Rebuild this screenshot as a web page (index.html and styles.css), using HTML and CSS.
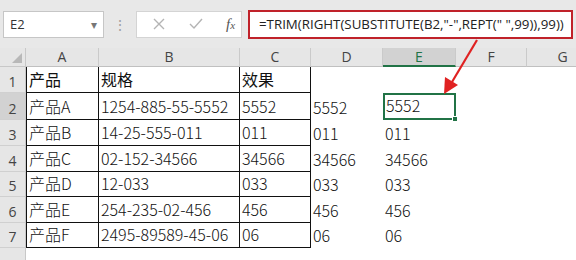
FILE: index.html
```html
<!DOCTYPE html>
<html lang="zh-CN">

<head>
  <meta charset="UTF-8" />
  <title>TRIM 公式示例</title>
  <link rel="stylesheet" href="styles.css">
</head>

<body>

  <!-- Formula bar -->
  <div class="formula-bar">
    <div class="name-box">
      <span>E2</span>
      <span class="drop">&#9662;</span>
    </div>
    <div class="grip">&#8942;</div>
    <div class="fx-box">
      <svg class="icon" width="14" height="14" viewBox="0 0 14 14">
        <path d="M2 2 L12 12 M12 2 L2 12" stroke="#b4b4b4" stroke-width="1.4" fill="none" />
      </svg>
      <svg class="icon" width="16" height="14" viewBox="0 0 16 14">
        <path d="M2 7 L6 11 L14 2" stroke="#b4b4b4" stroke-width="1.4" fill="none" />
      </svg>
      <span class="fx"><i>f</i><small>x</small></span>
    </div>
    <div class="formula">=TRIM(RIGHT(SUBSTITUTE(B2,"-",REPT(" ",99)),99))</div>
  </div>

  <!-- Sheet -->
  <div class="sheet">
    <div class="corner"></div>
    <div class="col-h">A</div>
    <div class="col-h">B</div>
    <div class="col-h">C</div>
    <div class="col-h">D</div>
    <div class="col-h active">E</div>
    <div class="col-h">F</div>
    <div class="col-h">G</div>

    <div class="row-h">1</div>
    <div class="cell b first top">产品</div>
    <div class="cell b top">规格</div>
    <div class="cell b top">效果</div>
    <div class="cell"></div>
    <div class="cell"></div>
    <div class="cell"></div>
    <div class="cell"></div>

    <div class="row-h active">2</div>
    <div class="cell b first">产品A</div>
    <div class="cell b">1254-885-55-5552</div>
    <div class="cell b">5552</div>
    <div class="cell">5552</div>
    <div class="cell selected">5552<span class="handle"></span></div>
    <div class="cell"></div>
    <div class="cell"></div>

    <div class="row-h">3</div>
    <div class="cell b first">产品B</div>
    <div class="cell b">14-25-555-011</div>
    <div class="cell b">011</div>
    <div class="cell">011</div>
    <div class="cell">011</div>
    <div class="cell"></div>
    <div class="cell"></div>

    <div class="row-h">4</div>
    <div class="cell b first">产品C</div>
    <div class="cell b">02-152-34566</div>
    <div class="cell b">34566</div>
    <div class="cell">34566</div>
    <div class="cell">34566</div>
    <div class="cell"></div>
    <div class="cell"></div>

    <div class="row-h">5</div>
    <div class="cell b first">产品D</div>
    <div class="cell b">12-033</div>
    <div class="cell b">033</div>
    <div class="cell">033</div>
    <div class="cell">033</div>
    <div class="cell"></div>
    <div class="cell"></div>

    <div class="row-h">6</div>
    <div class="cell b first">产品E</div>
    <div class="cell b">254-235-02-456</div>
    <div class="cell b">456</div>
    <div class="cell">456</div>
    <div class="cell">456</div>
    <div class="cell"></div>
    <div class="cell"></div>

    <div class="row-h">7</div>
    <div class="cell b first">产品F</div>
    <div class="cell b">2495-89589-45-06</div>
    <div class="cell b">06</div>
    <div class="cell">06</div>
    <div class="cell">06</div>
    <div class="cell"></div>
    <div class="cell"></div>

    <div class="row-h"></div>
  </div>

  <!-- red arrow pointing from the formula to E2 -->
  <svg class="arrow" width="576" height="260" viewBox="0 0 576 260">
    <line x1="477" y1="40" x2="452" y2="82" stroke="#e02222" stroke-width="2.2" />
    <polygon points="444,94 445,77 458,85" fill="#e02222" />
  </svg>

</body>

</html>
```

FILE: styles.css
```css
* {
  margin: 0;
  padding: 0;
  box-sizing: border-box;
}

body {
  width: 576px;
  height: 260px;
  overflow: hidden;
  background-color: #fff;
  font-family: "Noto Sans CJK SC", "Noto Sans", sans-serif;
  position: relative;
}

/* Formula bar */
.formula-bar {
  height: 48px;
  background-color: #e8e8e8;
  display: flex;
  align-items: center;
  padding: 0 3px 0 3px;
}

.name-box {
  width: 101px;
  height: 27px;
  background-color: #fff;
  border: 1px solid #c6c6c6;
  display: flex;
  align-items: center;
  justify-content: space-between;
  padding: 0 6px 0 6px;
  font-family: "Open Sans", sans-serif;
  font-size: 13px;
  color: #333;
}

.name-box .drop {
  color: #777;
  font-size: 12px;
}

.grip {
  width: 32px;
  text-align: center;
  color: #a0a0a0;
  font-size: 14px;
}

.fx-box {
  width: 106px;
  height: 27px;
  background-color: #fff;
  border: 1px solid #d4d4d4;
  display: flex;
  align-items: center;
  gap: 22px;
  padding-left: 15px;
}

.fx {
  font-family: "Liberation Serif", serif;
  color: #555;
  font-size: 15px;
}

.fx small {
  font-size: 11px;
  font-style: italic;
}

.formula {
  flex: 1;
  margin-left: 6px;
  height: 29px;
  background-color: #fff;
  border: 2px solid #c0222a;
  display: flex;
  align-items: center;
  padding-left: 9px;
  font-family: "Open Sans", sans-serif;
  font-size: 13.3px;
  color: #222;
  white-space: nowrap;
  overflow: hidden;
}

/* Sheet grid */
.sheet {
  display: grid;
  grid-template-columns: 26px 73px 141px 71px 72px 73px 71px 72px;
  grid-template-rows: 19px 26px 27px 26px 26px 25px 26px 25px 20px;
}

.corner {
  background-color: #e6e6e6;
  border-right: 1px solid #c8c8c8;
  border-bottom: 1px solid #c8c8c8;
  position: relative;
}

.corner::after {
  content: "";
  position: absolute;
  right: 3px;
  bottom: 3px;
  border-left: 10px solid transparent;
  border-bottom: 10px solid #b8b8b8;
}

.col-h {
  background-color: #e6e6e6;
  border-right: 1px solid #cacaca;
  border-bottom: 1px solid #c0c0c0;
  text-align: center;
  font-family: "Open Sans", sans-serif;
  font-size: 14px;
  line-height: 18px;
  color: #444;
}

.col-h.active {
  background-color: #d2d2d2;
  color: #217346;
  border-bottom: 2px solid #217346;
}

.row-h {
  background-color: #e6e6e6;
  border-right: 1px solid #c8c8c8;
  border-bottom: 1px solid #d0d0d0;
  display: flex;
  align-items: flex-end;
  justify-content: center;
  padding-bottom: 1px;
  font-family: "Open Sans", sans-serif;
  font-size: 14px;
  color: #444;
}

.row-h.active {
  background-color: #d2d2d2;
}

.cell {
  display: flex;
  align-items: flex-end;
  padding: 0 0 1px 2px;
  font-size: 16px;
  font-weight: 300;
  color: #111;
  white-space: nowrap;
  position: relative;
}

.cell.b {
  border-right: 1px solid #111;
  border-bottom: 1px solid #111;
}

.cell.first {
  border-left: 1px solid #111;
}

.cell.top {
  font-weight: 400;
}

.cell.selected {
  border: 2px solid #217346;
  padding-left: 1px;
}

.handle {
  position: absolute;
  right: -4px;
  bottom: -4px;
  width: 6px;
  height: 6px;
  background-color: #217346;
  border: 1px solid #fff;
}

.arrow {
  position: absolute;
  left: 0;
  top: 0;
  pointer-events: none;
}
```
